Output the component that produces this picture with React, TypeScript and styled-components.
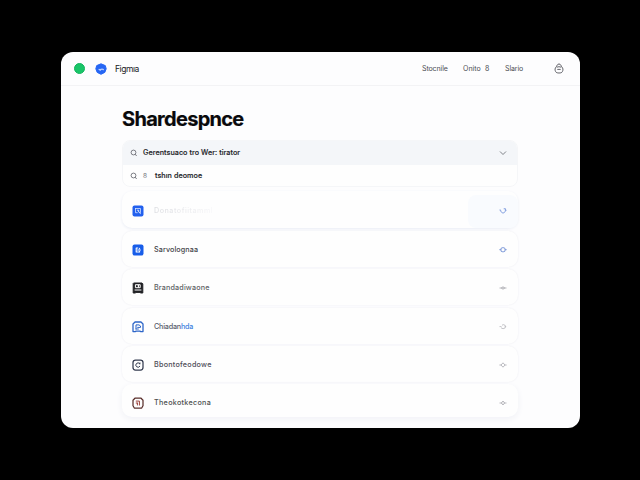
import React from "react";
import styled, { createGlobalStyle } from "styled-components";

const GlobalStyle = createGlobalStyle`
  * { box-sizing: border-box; }
  body { margin: 0; background: #000; font-family: Inter, "Liberation Sans", sans-serif; }
`;

const Stage = styled.main`
  width: 640px;
  height: 480px;
  padding: 52px 60px 0 61px;
  background: #000;
  overflow: hidden;
`;

const Window = styled.section`
  width: 518.5px;
  height: 376px;
  border-radius: 12px;
  background: #fdfdfe;
  overflow: hidden;
`;

const Header = styled.header`
  display: flex;
  align-items: center;
  height: 34px;
  padding: 0 15.5px 0 13px;
  border-bottom: 1px solid #f3f3f5;
`;

const StatusDot = styled.span`
  width: 11px;
  height: 11px;
  border-radius: 50%;
  background: #19c568;
  border: 1px solid #12b35c;
  margin-right: 10px;
`;

const Brand = styled.span`
  margin-left: 8px;
  font-size: 8.5px;
  line-height: 12px;
  letter-spacing: -0.45px;
  color: #202024;
`;

const Nav = styled.nav`
  display: flex;
  margin-left: auto;
  align-items: center;
`;

const NavItem = styled.span<{ $width: number; $spacing: number }>`
  width: ${(p) => p.$width}px;
  font-size: 7px;
  line-height: 12px;
  letter-spacing: ${(p) => p.$spacing}px;
  white-space: pre;
  color: #4a4b51;
`;

const Content = styled.div`
  width: 396px;
  margin-left: 61px;
`;

const Title = styled.h1`
  margin: 0;
  padding-top: 20px;
  height: 54px;
  font-size: 20px;
  line-height: 26px;
  font-weight: 700;
  letter-spacing: -0.7px;
  color: #09090b;
  -webkit-text-stroke: 0.2px #09090b;
`;

const SearchBox = styled.div`
  height: 47px;
  border: 1px solid #f5f6f8;
  border-radius: 8px;
  overflow: hidden;
  background: #fefefe;
`;

const SearchRow = styled.div<{ $filled?: boolean }>`
  display: flex;
  align-items: center;
  height: ${(p) => (p.$filled ? 24 : 21)}px;
  padding: 0 10px 0 7px;
  background: ${(p) => (p.$filled ? "#f4f6f9" : "transparent")};
  svg:last-child { margin-left: auto; }
`;

const SearchText = styled.span<{ $offset: number; $spacing: number }>`
  margin-left: ${(p) => p.$offset}px;
  font-size: 7.2px;
  line-height: 10px;
  font-weight: 500;
  letter-spacing: ${(p) => p.$spacing}px;
  color: #242529;
  -webkit-text-stroke: 0.15px #242529;
`;

const Hint = styled.span`
  width: 6px;
  margin-left: 5px;
  font-size: 6.5px;
  line-height: 10px;
  color: #74757c;
`;

const List = styled.div`
  display: flex;
  flex-direction: column;
  gap: 2.4px;
  padding-top: 3.5px;
`;

const Card = styled.article<{ $active?: boolean; $last?: boolean }>`
  display: flex;
  align-items: center;
  height: ${(p) => (p.$last ? 33 : p.$active ? 37 : 36)}px;
  margin-bottom: ${(p) => (p.$active ? 1 : 0)}px;
  padding-left: 10px;
  padding-top: ${(p) => (p.$last ? 5 : p.$active ? 4 : 2)}px;
  border-radius: 10px;
  background: #fefefe;
  box-shadow: ${(p) =>
    p.$active ? "0 1px 3px #eaedf5" : p.$last ? "0 2px 6px #f0f1f6" : "0 0 2px #ececf1"};
`;

const Label = styled.span<{ $color: string; $spacing: number }>`
  margin-left: 10px;
  font-size: 7.2px;
  line-height: 10px;
  font-weight: 500;
  letter-spacing: ${(p) => p.$spacing}px;
  color: ${(p) => p.$color};
`;

const Accent = styled.span`
  color: #4182df;
`;

const Faded = styled.span`
  background: linear-gradient(90deg, #dcdde1, #f7f7f9);
  background-clip: text;
  -webkit-background-clip: text;
  color: transparent;
`;

const Action = styled.span<{ $active?: boolean }>`
  display: flex;
  align-items: center;
  justify-content: flex-end;
  align-self: stretch;
  width: 50px;
  margin-left: auto;
  padding-right: 11px;
  border-radius: 8px;
  background: ${(p) => (p.$active ? "#f9fbfe" : "transparent")};
`;

type Mark = "search" | "edit" | "person" | "doc" | "ring" | "gate";

function Tile({ mark, color }: { mark: Mark; color: string }) {
  const solid = mark === "search" || mark === "edit";
  return (
    <svg width="12" height="12" viewBox="0 0 12 12" fill="none" strokeLinecap="round" strokeLinejoin="round">
      {solid && <rect x=".5" y=".5" width="11" height="11" rx="2" fill={color} />}
      {mark === "search" && (
        <g stroke="#dce8ff" strokeWidth="1">
          <path d="M3.5 3.5v4.2h1.8M3.5 3.5h5v4" opacity=".75" />
          <path d="M5.5 5.2h1.2v1.6M7 7.2l1.4 1.3" />
        </g>
      )}
      {mark === "edit" && (
        <g stroke="#fff" strokeWidth="1.1">
          <path d="M5.8 4H4.2v4h3.4V7.4" />
          <path d="M5.6 6h2.8M7.6 4.4v.2" />
        </g>
      )}
      {mark === "person" && (
        <>
          <path d="M2 1h8l.8.8V11H8.8l-.8-.6H4l-.8.6h-2V1.8z" stroke={color} strokeWidth="1" fill={color} />
          <path d="M3.8 2.7h4.4v3H3.8zM3 8h6" stroke="#fff" strokeWidth="1" />
          <path d="M6.4 3.3v1.8" stroke="#fff" strokeWidth="1.1" />
        </>
      )}
      {mark === "doc" && (
        <>
          <path d="M3 1h6l2 2v7.6H8.8l-1-.5H4.2l-1 .5H1V3z" stroke={color} strokeWidth="1.3" />
          <path d="M4 8V3.9h3L8.5 5v1.4H5.7M4 8h2.4" stroke={color} strokeWidth="1" />
        </>
      )}
      {mark === "ring" && (
        <>
          <rect x="1" y="1" width="10" height="10" rx="2.5" stroke={color} strokeWidth="1.25" />
          <path d="M7.7 4.6A2.2 2.2 0 1 0 7.8 7.4M7.9 3.9v1" stroke={color} strokeWidth="1" />
        </>
      )}
      {mark === "gate" && (
        <>
          <path d="M3.2 1h5.6L11 3.2v5.6L9.7 11H2.3L1 8.8V3.2z" stroke={color} strokeWidth="1.25" />
          <path d="M4.2 4.1h3.2v4M5.4 6.2v1.8M4.2 6h1.2" stroke="#9a3f38" strokeWidth="1" />
        </>
      )}
    </svg>
  );
}

function BrandMark() {
  return (
    <svg width="12" height="12" viewBox="0 0 12 12">
      <path d="M6 .8 10.3 2.6l.9 3.2-1.4 3.6L6 11.3 2.2 9.4.8 5.8l.9-3.2z" fill="#2666f4" stroke="#2666f4" strokeLinejoin="round" />
      <path d="M3.6 6.4h1.1v.8h1V6.2h2.6v1" fill="none" stroke="#dbe7ff" />
    </svg>
  );
}

function ProfileIcon() {
  return (
    <svg width="10" height="11" viewBox="0 0 10 11" fill="none" stroke="#54555b" strokeWidth=".9">
      <path d="M5 1C3.2 1 3 2.8 2.3 3.8.8 5 .8 7 1.5 8.4c.6 1.3 1.8 1.6 3.5 1.6s3-.3 3.5-1.6C9.2 7 9.2 5 7.7 3.8 7 2.8 6.8 1 5 1z" />
      <path d="M2.8 4.2Q5 3.2 7.2 4.2M3.3 6.4h3.4" />
    </svg>
  );
}

function SearchIcon() {
  return (
    <svg width="8" height="8" viewBox="0 0 8 8" fill="none" stroke="#65676f" strokeWidth=".85">
      <circle cx="3.5" cy="3.5" r="2.4" />
      <path d="m5.3 5.2 1.3 1.8" />
    </svg>
  );
}

function Chevron() {
  return (
    <svg width="8" height="6" viewBox="0 0 8 6" fill="none" stroke="#72747b" strokeWidth=".9">
      <path d="m1 1.5 3 3 3-3" />
    </svg>
  );
}

type Glyph = "refresh" | "sun" | "eye" | "turn" | "diamond" | "spark";

const glyphPaths: Record<Glyph, string> = {
  refresh: "M.5 3h1.2M1.6 3.2C2 6.8 6 6.8 6.4 3.5V1.8M4.7 1.8l1.8-.1M6.5 3.3h1",
  sun: "M2 2.3Q4 .8 6 2.3V5.2Q4 6.7 2 5.2zM.3 3.7H2M6 3.7h1.7",
  eye: "M.5 4h1.3Q4 1.6 6.2 4h1.3M1.8 4Q4 6.4 6.2 4M3 4h2",
  turn: "M.5 3.6h2M2 4.8Q4 6.6 6.2 4.9V2.4Q4.2 1 3 2.2M6 3.6h1.2",
  diamond: "M.4 4H2l2-2.2L6 4h1.6M2 4l2 2.2L6 4",
  spark: "M.5 4h1.6L4 2l1.9 2L4 6 2.1 4M5.9 4h1.6M3.4 4h1.2",
};

function GlyphIcon({ kind, color }: { kind: Glyph; color: string }) {
  return (
    <svg width="8" height="8" viewBox="0 0 8 8" fill="none" stroke={color} strokeWidth=".8">
      <path d={glyphPaths[kind]} />
    </svg>
  );
}

interface Item {
  label: string;
  accent?: string;
  spacing: number;
  color: string;
  mark: Mark;
  tile: string;
  glyph: Glyph;
  glyphColor: string;
  faded?: boolean;
}

const items: Item[] = [
  { label: "Donatofiitamml", spacing: 0.5, color: "#e2e3e7", mark: "search", tile: "#2260ee", glyph: "refresh", glyphColor: "#6488d8", faded: true },
  { label: "Sarvolognaa", spacing: 0.1, color: "#424348", mark: "edit", tile: "#175de9", glyph: "sun", glyphColor: "#6486d2" },
  { label: "Brandadiwaone", spacing: 0.15, color: "#5d5e64", mark: "person", tile: "#202124", glyph: "eye", glyphColor: "#aaaab0" },
  { label: "Chiadan", accent: "hda", spacing: -0.2, color: "#595d6c", mark: "doc", tile: "#2c65c8", glyph: "turn", glyphColor: "#b5b5ba" },
  { label: "Bbontofeodowe", spacing: 0.25, color: "#4c4b56", mark: "ring", tile: "#343c50", glyph: "diamond", glyphColor: "#aaaab0" },
  { label: "Theokotkecona", spacing: 0.3, color: "#4d504f", mark: "gate", tile: "#5b302c", glyph: "spark", glyphColor: "#aaaab0" },
];

export default function App() {
  return (
    <Stage>
      <GlobalStyle />
      <Window>
        <Header>
          <StatusDot />
          <BrandMark />
          <Brand>Figmıa</Brand>
          <Nav>
            <NavItem $width={41} $spacing={-0.1}>Stocnile</NavItem>
            <NavItem $width={42} $spacing={0.05}>Onito  8</NavItem>
            <NavItem $width={49} $spacing={-0.1}>Slario</NavItem>
            <ProfileIcon />
          </Nav>
        </Header>
        <Content>
          <Title>Shardespnce</Title>
          <SearchBox>
            <SearchRow $filled>
              <SearchIcon />
              <SearchText $offset={5} $spacing={0.05}>Gerentsuaco tro Wer: tirator</SearchText>
              <Chevron />
            </SearchRow>
            <SearchRow>
              <SearchIcon />
              <Hint>8</Hint>
              <SearchText $offset={6} $spacing={0.05}>tshın deomoe</SearchText>
            </SearchRow>
          </SearchBox>
          <List>
            {items.map((item, i) => (
              <Card key={item.label} $active={i === 0} $last={i === items.length - 1}>
                <Tile mark={item.mark} color={item.tile} />
                <Label $color={item.color} $spacing={item.spacing}>
                  {item.faded ? <Faded>{item.label}</Faded> : item.label}
                  {item.accent && <Accent>{item.accent}</Accent>}
                </Label>
                <Action $active={i === 0}>
                  <GlyphIcon kind={item.glyph} color={item.glyphColor} />
                </Action>
              </Card>
            ))}
          </List>
        </Content>
      </Window>
    </Stage>
  );
}
